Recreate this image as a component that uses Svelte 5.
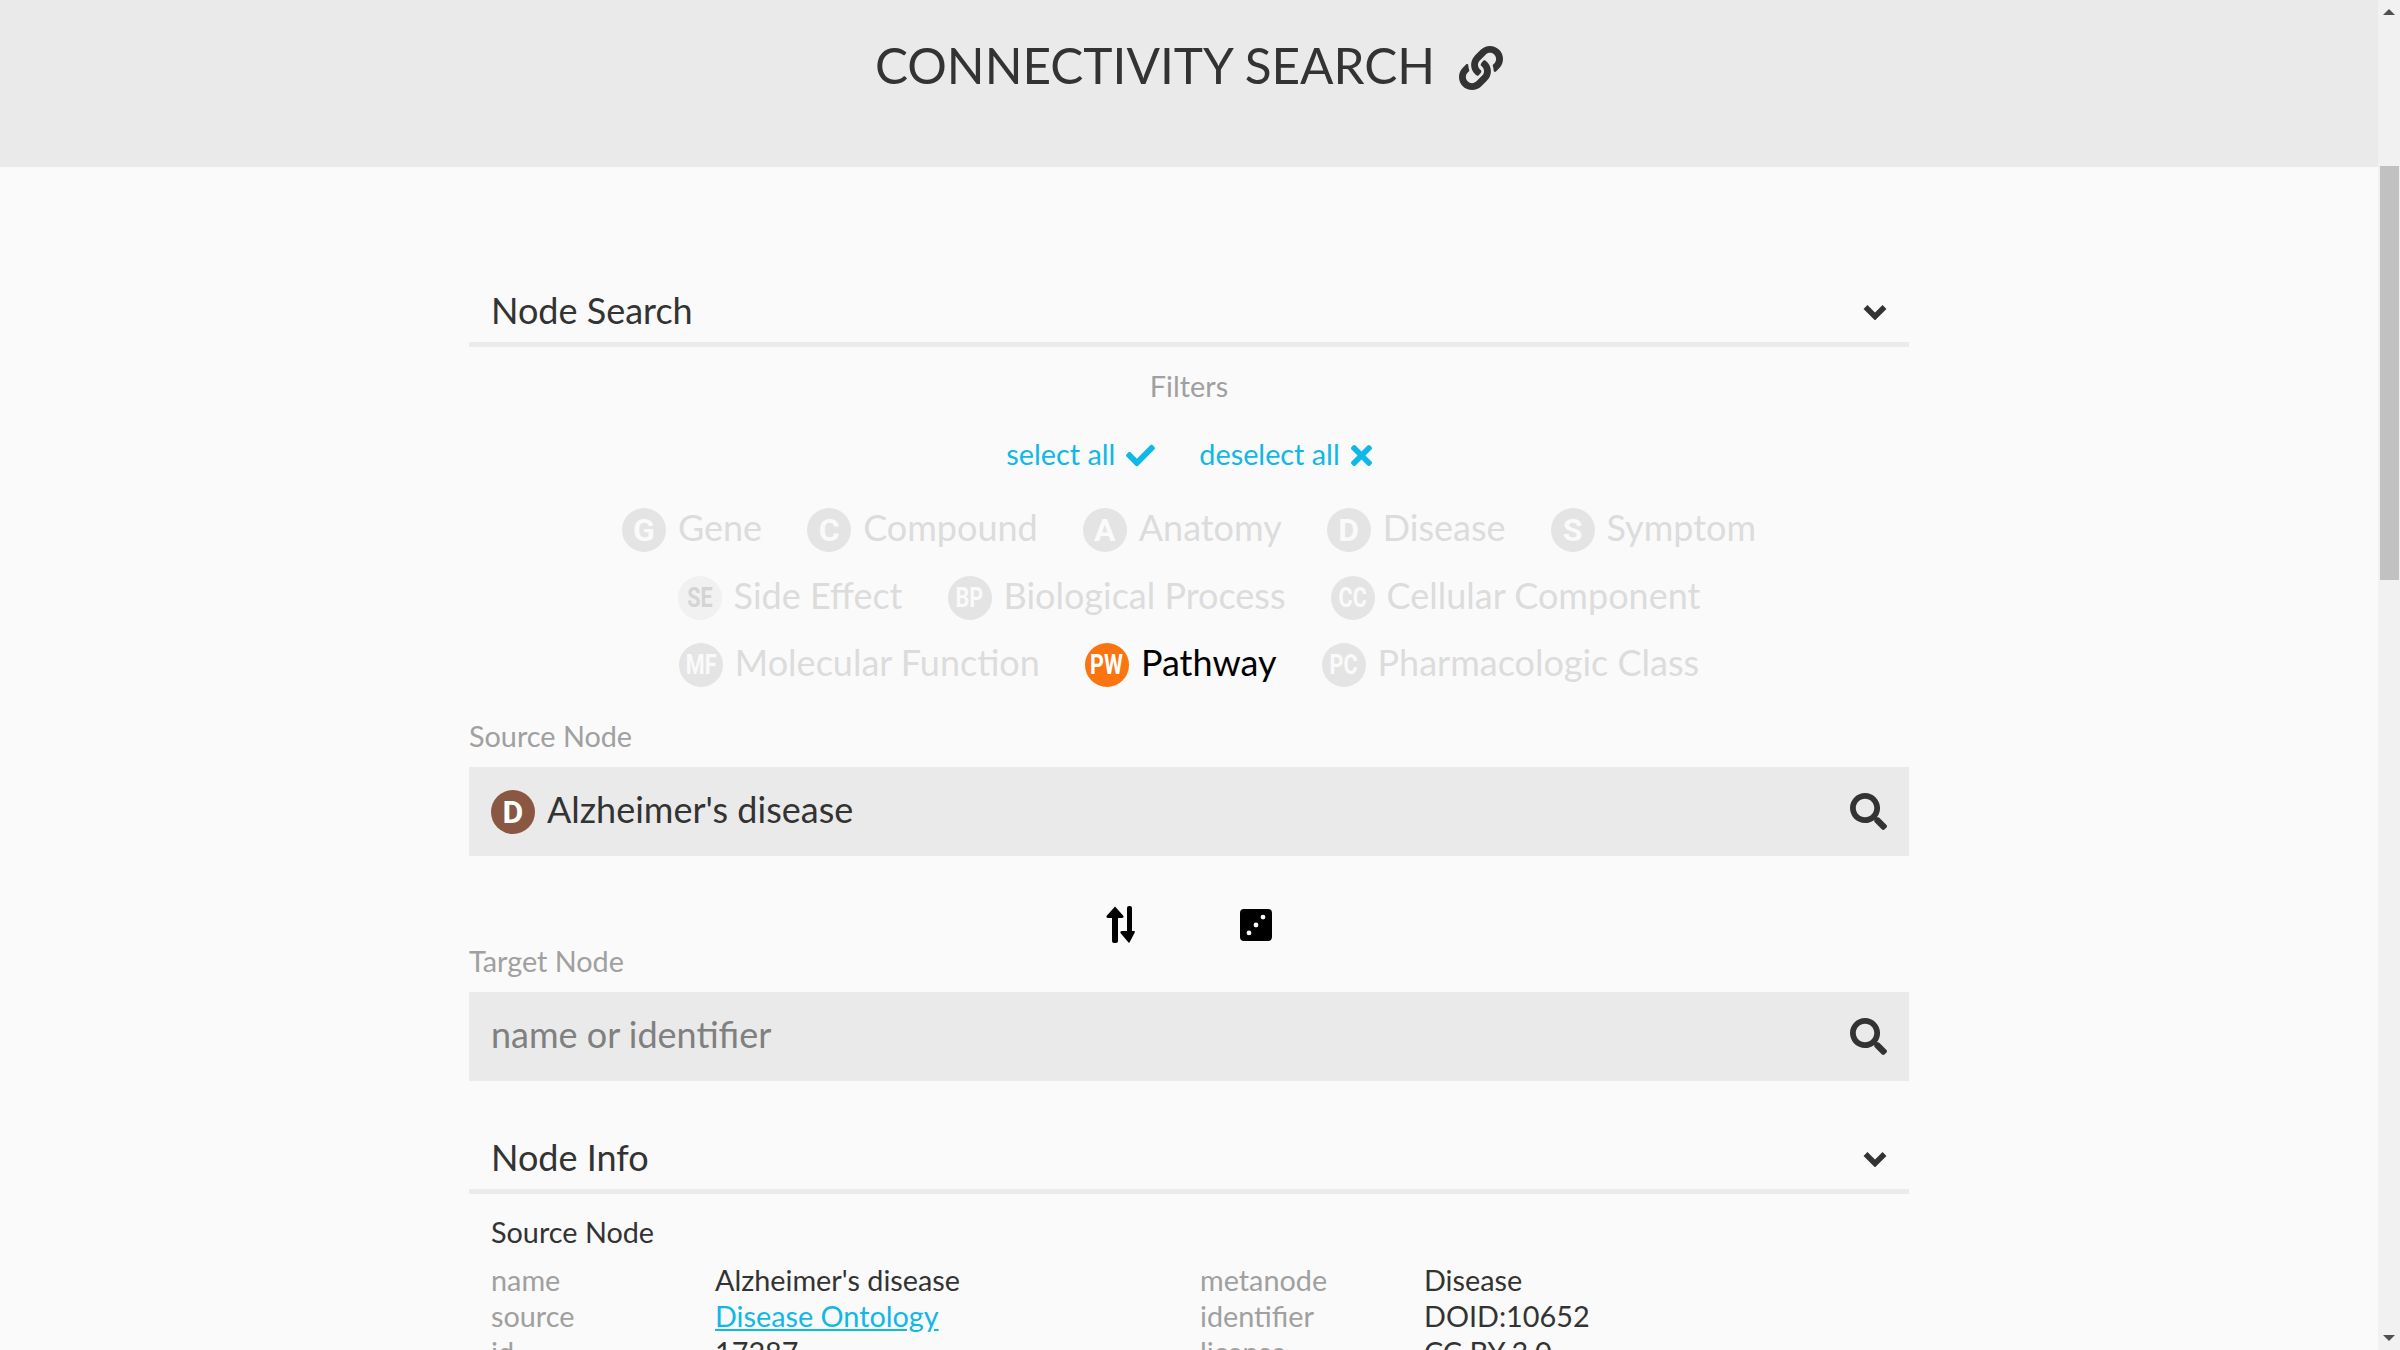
<script>
	const filterRows = [
		[
			{ abbr: 'G', name: 'Gene' },
			{ abbr: 'C', name: 'Compound' },
			{ abbr: 'A', name: 'Anatomy' },
			{ abbr: 'D', name: 'Disease' },
			{ abbr: 'S', name: 'Symptom' }
		],
		[
			{ abbr: 'SE', name: 'Side Effect', pale: true },
			{ abbr: 'BP', name: 'Biological Process' },
			{ abbr: 'CC', name: 'Cellular Component' }
		],
		[
			{ abbr: 'MF', name: 'Molecular Function' },
			{ abbr: 'PW', name: 'Pathway', active: true },
			{ abbr: 'PC', name: 'Pharmacologic Class' }
		]
	];

	const info = [
		['name', "Alzheimer's disease", 'metanode', 'Disease'],
		['source', 'Disease Ontology', 'identifier', 'DOID:10652'],
		['id', '17287', 'license', 'CC BY 3.0']
	];

	const searchPath = 'M505 442.7L405.3 343c-4.5-4.5-10.6-7-17-7H372c27.6-35.3 44-79.7 44-128C416 93.1 322.9 0 208 0S0 93.1 0 208s93.1 208 208 208c48.3 0 92.7-16.4 128-44v16.3c0 6.4 2.5 12.5 7 17l99.7 99.7c9.4 9.4 24.6 9.4 33.9 0l28.3-28.3c9.4-9.4 9.4-24.6.1-34zM208 336c-70.7 0-128-57.2-128-128 0-70.7 57.2-128 128-128 70.7 0 128 57.2 128 128 0 70.7-57.2 128-128 128z';
</script>

<div class="page">
	<main>
		<header>
			<h1>CONNECTIVITY SEARCH</h1>
			<svg class="link-icon" viewBox="0 0 512 512"><path d="M326.612 185.391c59.747 59.809 58.927 155.698.36 214.59-.11.12-.24.25-.36.37l-67.2 67.2c-59.27 59.27-155.699 59.262-214.96 0-59.27-59.26-59.27-155.7 0-214.96l37.106-37.106c9.84-9.84 26.786-3.3 27.294 10.606.648 17.722 3.826 35.527 9.69 52.721 1.986 5.822.567 12.262-3.783 16.612l-13.087 13.087c-28.026 28.026-28.905 73.66-1.155 101.96 28.024 28.579 74.086 28.749 102.325.51l67.2-67.19c28.191-28.191 28.073-73.757 0-101.83-3.701-3.694-7.429-6.564-10.341-8.569a16.037 16.037 0 0 1-6.947-12.606c-.396-10.567 3.348-21.456 11.698-29.806l21.054-21.055c5.521-5.521 14.182-6.199 20.584-1.731a152.482 152.482 0 0 1 20.522 17.197zM467.547 44.449c-59.261-59.262-155.69-59.27-214.96 0l-67.2 67.2c-.12.12-.25.25-.36.37-58.566 58.892-59.387 154.781.36 214.59a152.454 152.454 0 0 0 20.521 17.196c6.402 4.468 15.064 3.789 20.584-1.731l21.054-21.055c8.35-8.35 12.094-19.239 11.698-29.806a16.037 16.037 0 0 0-6.947-12.606c-2.912-2.005-6.64-4.875-10.341-8.569-28.073-28.073-28.191-73.639 0-101.83l67.2-67.19c28.239-28.239 74.3-28.069 102.325.51 27.75 28.3 26.872 73.934-1.155 101.96l-13.087 13.087c-4.35 4.35-5.769 10.79-3.783 16.612 5.864 17.194 9.042 34.999 9.69 52.721.509 13.906 17.454 20.446 27.294 10.606l37.106-37.106c59.271-59.259 59.271-155.699.001-214.959z" /></svg>
		</header>

		<div class="content">
			<div class="section-head first">
				<span>Node Search</span>
				<svg class="chevron" viewBox="0 0 24 15"><polyline points="2.5,2 12,11.5 21.5,2" /></svg>
			</div>

			<div class="filters-label">Filters</div>

			<div class="select-row">
				<a href="#all">
					select all
					<svg class="check" viewBox="0 0 512 512"><path d="M173.898 439.404l-166.4-166.4c-9.997-9.997-9.997-26.206 0-36.204l36.203-36.204c9.997-9.998 26.207-9.998 36.204 0L192 312.69 432.095 72.596c9.997-9.997 26.207-9.997 36.204 0l36.203 36.204c9.997 9.997 9.997 26.206 0 36.204l-294.4 294.401c-9.998 9.997-26.207 9.997-36.204-.001z" /></svg>
				</a>
				<a href="#none">
					deselect all
					<svg class="times" viewBox="0 0 352 512"><path d="M242.72 256l100.07-100.07c12.28-12.28 12.28-32.19 0-44.48l-22.24-22.24c-12.28-12.28-32.19-12.28-44.48 0L176 189.28 75.93 89.21c-12.28-12.28-32.19-12.28-44.48 0L9.21 111.45c-12.28 12.28-12.28 32.19 0 44.48L109.28 256 9.21 356.07c-12.28 12.28-12.28 32.19 0 44.48l22.24 22.24c12.28 12.28 32.2 12.28 44.48 0L176 322.72l100.07 100.07c12.28 12.28 32.2 12.28 44.48 0l22.24-22.24c12.28-12.28 12.28-32.19 0-44.48L242.72 256z" /></svg>
				</a>
			</div>

			<div class="chips">
				{#each filterRows as row}
					<div class="chip-row">
						{#each row as chip}
							<div class="chip" class:active={chip.active} class:pale={chip.pale}>
								<span class="badge"><span class:two={chip.abbr.length > 1}>{chip.abbr}</span></span>
								<span class="chip-name">{chip.name}</span>
							</div>
						{/each}
					</div>
				{/each}
			</div>

			<div class="field-label source-label">Source Node</div>
			<div class="field">
				<span class="badge disease"><span>D</span></span>
				<span class="field-value">Alzheimer's disease</span>
				<svg class="search" viewBox="0 0 512 512"><path d={searchPath} /></svg>
			</div>

			<div class="swap-row">
				<svg class="swap" viewBox="0 0 29 37">
					<path d="M9 0.5 L17.5 10 Q18 12 16 12 H12 V35 Q12 37 10 37 H8 Q6 37 6 35 V12 H2 Q0 12 0.5 10 Z" />
					<path d="M21 2 Q21 0 23 0 H24 Q26 0 26 2 V25 H28 Q29.5 25 28.5 27 L23.5 36.5 Q23 37 22.5 36.5 L14.5 27 Q14 25 16 25 H21 Z" />
				</svg>
				<svg class="dice" viewBox="0 0 32 32">
					<path fill-rule="evenodd" d="M4 0H28A4 4 0 0 1 32 4V28A4 4 0 0 1 28 32H4A4 4 0 0 1 0 28V4A4 4 0 0 1 4 0ZM9 21.5A2.4 2.4 0 1 0 9 26.3A2.4 2.4 0 1 0 9 21.5ZM16 13.6A2.4 2.4 0 1 0 16 18.4A2.4 2.4 0 1 0 16 13.6ZM23 5.7A2.4 2.4 0 1 0 23 10.5A2.4 2.4 0 1 0 23 5.7Z" />
				</svg>
			</div>

			<div class="field-label">Target Node</div>
			<div class="field">
				<span class="placeholder">name or identifier</span>
				<svg class="search" viewBox="0 0 512 512"><path d={searchPath} /></svg>
			</div>

			<div class="section-head">
				<span>Node Info</span>
				<svg class="chevron" viewBox="0 0 24 15"><polyline points="2.5,2 12,11.5 21.5,2" /></svg>
			</div>

			<div class="info">
				<div class="info-title">Source Node</div>
				<div class="info-grid">
					{#each info as row}
						<span class="key">{row[0]}</span>
						{#if row[0] === 'source'}
							<a href="#doid" class="val">{row[1]}</a>
						{:else}
							<span class="val">{row[1]}</span>
						{/if}
						<span class="key">{row[2]}</span>
						<span class="val">{row[3]}</span>
					{/each}
				</div>
			</div>
		</div>
	</main>

	<div class="scrollbar">
		<span class="arrow up"></span>
		<div class="thumb"></div>
		<span class="arrow down"></span>
	</div>
</div>

<style>
	:global(body) {
		margin: 0;
		background: #fafafa;
		overflow: hidden;
	}

	.page {
		display: flex;
		height: 1350px;
		overflow: hidden;
		font-family: Lato, sans-serif;
		font-size: 28.8px;
		line-height: 34px;
		color: #333;
		background: #fafafa;
	}

	main {
		flex: 1;
		min-width: 0;
	}

	header {
		height: 167px;
		box-sizing: border-box;
		padding-top: 36px;
		background: #eaeaea;
		display: flex;
		justify-content: center;
		align-items: flex-start;
		gap: 24px;
	}

	h1 {
		margin: 0;
		font-size: 49.5px;
		line-height: 58px;
		font-weight: 400;
	}

	.link-icon {
		width: 44px;
		height: 44px;
		margin-top: 10px;
		fill: #333;
	}

	.content {
		width: 1440px;
		margin: 0 auto;
	}

	.section-head {
		display: flex;
		justify-content: space-between;
		align-items: center;
		height: 44px;
		padding: 0 22px 9px;
		border-bottom: 5px solid #ebebeb;
		font-size: 36px;
		line-height: 44px;
		margin-top: 55px;
	}

	.section-head span {
		margin-bottom: 3px;
	}

	.section-head.first {
		margin-top: 122px;
	}

	.chevron {
		width: 24px;
		height: 15px;
		margin-top: 3px;
		fill: none;
		stroke: #333;
		stroke-width: 5.5px;
	}

	.filters-label {
		margin-top: 22px;
		text-align: center;
		color: #a0a0a0;
	}

	.select-row {
		margin-top: 34px;
		display: flex;
		justify-content: center;
		gap: 44px;
	}

	.select-row a {
		display: flex;
		align-items: center;
		gap: 11px;
		color: #0fb8e6;
		text-decoration: none;
	}

	.check {
		width: 29px;
		height: 29px;
		margin-top: 2px;
		fill: #0fb8e6;
	}

	.times {
		width: 21px;
		height: 31px;
		margin-top: 2px;
		fill: #0fb8e6;
	}

	.chips {
		margin-top: 37px;
		display: flex;
		flex-direction: column;
		gap: 23.5px;
	}

	.chip-row {
		display: flex;
		justify-content: center;
		gap: 45px;
	}

	.chip {
		display: flex;
		align-items: center;
		gap: 12px;
		height: 44px;
		font-size: 36px;
		color: #dcdcdc;
	}

	.chip-name {
		margin-bottom: 6px;
	}

	.chip.active {
		color: #000;
	}

	.badge {
		width: 44px;
		height: 44px;
		flex: none;
		border-radius: 50%;
		display: flex;
		align-items: center;
		justify-content: center;
		background: #e4e4e4;
		color: #fafafa;
		font-family: Roboto, sans-serif;
		font-size: 32px;
		font-weight: 700;
	}

	.two {
		font-size: 27px;
		transform: scaleX(0.8);
	}

	.chip.pale .badge {
		background: #f1f1f1;
		color: #d4d4d4;
	}

	.chip.active .badge {
		background: #fa740f;
		color: #fff;
	}

	.badge.disease {
		background: #8a5743;
		color: #fff;
	}

	.field-label {
		color: #a0a0a0;
	}

	.source-label {
		margin-top: 32px;
	}

	.field {
		margin-top: 14px;
		height: 89px;
		box-sizing: border-box;
		padding: 0 22px;
		display: flex;
		align-items: center;
		gap: 12px;
		background: #eaeaea;
		font-size: 36px;
	}

	.field-value,
	.placeholder {
		flex: 1;
		margin-bottom: 6px;
	}

	.placeholder {
		color: #808080;
	}

	.search {
		width: 37px;
		height: 37px;
		fill: #333;
	}

	.swap-row {
		height: 88px;
		box-sizing: border-box;
		padding-top: 50px;
		display: flex;
		align-items: flex-start;
		margin-left: 637px;
		gap: 105px;
	}

	.swap {
		width: 29px;
		height: 37px;
		fill: #000;
	}

	.dice {
		width: 32px;
		height: 32px;
		margin-top: 3px;
		fill: #000;
	}

	.info {
		padding: 0 22px;
	}

	.info-title {
		margin-top: 21px;
	}

	.info-grid {
		margin-top: 13px;
		display: grid;
		grid-template-columns: 224px 485px 224px 1fr;
		line-height: 36px;
	}

	.key {
		color: #a0a0a0;
	}

	.val {
		color: #333;
	}

	a.val {
		justify-self: start;
		color: #0fb8e6;
	}

	.scrollbar {
		width: 22px;
		flex: none;
		background: #f1f1f1;
		display: flex;
		flex-direction: column;
		align-items: center;
		position: relative;
	}

	.arrow {
		position: absolute;
		left: 5px;
		width: 0;
		height: 0;
		border-left: 6px solid transparent;
		border-right: 6px solid transparent;
	}

	.arrow.up {
		top: 9px;
		border-bottom: 6px solid #505050;
	}

	.arrow.down {
		bottom: 9px;
		border-top: 6px solid #505050;
	}

	.thumb {
		width: 19px;
		height: 414px;
		margin-top: 166px;
		background: #c1c1c1;
	}
</style>
